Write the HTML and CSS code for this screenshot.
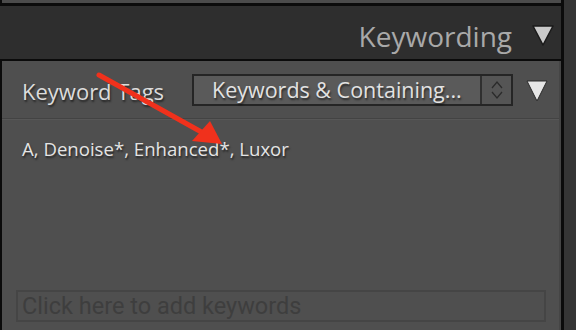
FILE: index.html
```html
<!DOCTYPE html>
<html>
<head>
  <title>Keywording</title>
  <link rel="stylesheet" href="styles.css">
</head>
<body>
  <div class="sidebar">
    <div class="prev-panel"></div>
    <div class="panel-header">
      <span class="panel-title">Keywording</span>
      <svg class="header-tri" width="22" height="22" viewBox="0 0 22 22">
        <polygon points="1,2 21,2 11,21" fill="#c9c9c9" stroke="#1a1a1a" stroke-width="1.5" stroke-linejoin="round"/>
      </svg>
    </div>
    <div class="panel">
      <div class="tags-row">
        <span class="tags-label">Keyword Tags</span>
        <div class="select">
          <span class="select-text">Keywords &amp; Containing...</span>
          <div class="stepper">
            <svg width="14" height="22" viewBox="0 0 14 22">
              <polyline points="2,9 7,3 12,9" fill="none" stroke="#2b2b2b" stroke-width="1.3"/>
              <polyline points="2,13 7,19 12,13" fill="none" stroke="#2b2b2b" stroke-width="1.3"/>
            </svg>
          </div>
        </div>
        <svg class="row-tri" width="22" height="22" viewBox="0 0 22 22">
          <polygon points="1,1 21,1 11,21" fill="#e6e6e6" stroke="#2a2a2a" stroke-width="1" stroke-linejoin="round"/>
        </svg>
      </div>
      <div class="keyword-list">A, Denoise*, Enhanced*, Luxor</div>
      <div class="add-box">Click here to add keywords</div>
    </div>
  </div>

  <svg class="annotation" width="576" height="330" viewBox="0 0 576 330">
    <line x1="99" y1="75" x2="205" y2="134" stroke="#f0311c" stroke-width="5" stroke-linecap="round"/>
    <polygon points="222,144 192,141 210,121" fill="#f0311c"/>
  </svg>
</body>
</html>
```

FILE: styles.css
```css
body {
  margin: 0;
  width: 576px;
  height: 330px;
  overflow: hidden;
  background-color: #353535;
  font-family: "Open Sans", sans-serif;
  position: relative;
}
.sidebar {
  width: 561px;
  height: 330px;
  border-right: 3px solid #0b0b0b;
  display: flex;
  flex-direction: column;
}
.prev-panel {
  height: 3px;
  background-color: #4b4b4b;
  border-left: 2px solid #0b0b0b;
  border-bottom: 3px solid #0b0b0b;
}
.panel-header {
  height: 53px;
  background-color: #2e2e2e;
  border-bottom: 2px solid #0b0b0b;
  display: flex;
  align-items: center;
  justify-content: flex-end;
  padding-right: 7px;
  gap: 20px;
}
.panel-title {
  color: #a9a9a9;
  font-size: 28px;
  margin-top: 6px;
}
.header-tri {
  margin-top: 5px;
}
.panel {
  flex: 1;
  background-color: #4f4f4f;
  border-left: 2px solid #0b0b0b;
  border-right: 2px solid #454545;
  display: flex;
  flex-direction: column;
}
.tags-row {
  height: 58px;
  display: flex;
  align-items: center;
  padding-left: 20px;
  padding-top: 2px;
  box-sizing: border-box;
  border-bottom: 1px solid #434343;
  box-shadow: 0 1px 0 #575757;
}
.tags-label {
  color: #dcdcdc;
  font-size: 22px;
  text-shadow: 1px 2px 2px rgba(0, 0, 0, 0.55);
  width: 170px;
}
.select {
  width: 317px;
  height: 28px;
  margin-top: -2px;
  border: 2px solid #252525;
  background-color: #5a5a5a;
  display: flex;
  align-items: center;
}
.select-text {
  flex: 1;
  padding-left: 18px;
  color: #e2e2e2;
  font-size: 21.5px;
  text-shadow: 1px 2px 2px rgba(0, 0, 0, 0.55);
}
.stepper {
  width: 29px;
  height: 28px;
  border-left: 2px solid #2f2f2f;
  background-color: #555555;
  display: flex;
  align-items: center;
  justify-content: center;
}
.row-tri {
  margin-left: 13px;
}
.keyword-list {
  padding: 17px 0 0 20px;
  height: 150px;
  color: #e4e4e4;
  font-size: 18.6px;
  text-shadow: 1px 2px 2px rgba(0, 0, 0, 0.55);
}
.add-box {
  margin: 4px 13px 0 14px;
  height: 28px;
  border: 2px solid #454545;
  color: #3e3e3e;
  font-family: Roboto, sans-serif;
  font-size: 23.5px;
  line-height: 28px;
  padding-left: 4px;
}
.annotation {
  position: absolute;
  left: 0;
  top: 0;
}
```
